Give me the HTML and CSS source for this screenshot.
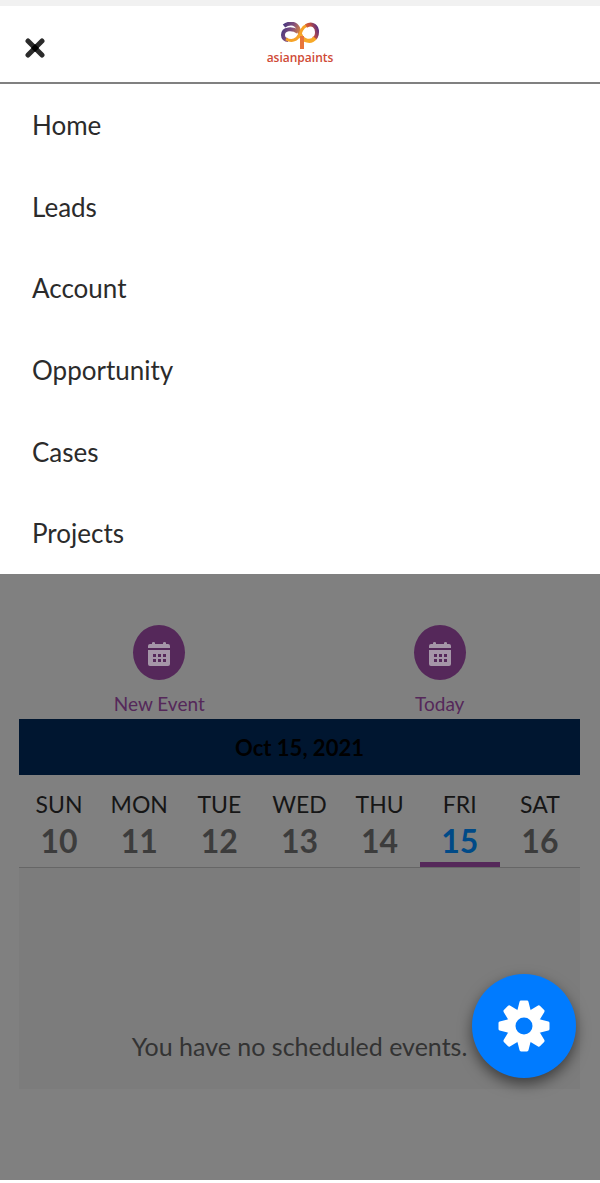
FILE: index.html
```html
<!DOCTYPE html>
<html lang="en">
<head>
  <meta charset="UTF-8">
  <meta name="viewport" content="width=device-width, initial-scale=1.0">
  <title>Asian Paints - Calendar</title>
  <link rel="stylesheet" href="styles.css">
</head>
<body>
  <!-- Header with close button and logo -->
  <header class="header">
    <button class="close-btn" type="button" aria-label="Close menu">
      <svg width="20" height="20" viewBox="0 0 20 20">
        <path d="M3 3L17 17M17 3L3 17" stroke="#2b2b2b" stroke-width="5" stroke-linecap="round"/>
        <path d="M10 6L14 10L10 14L6 10Z" fill="#000"/>
      </svg>
    </button>
    <a class="logo" href="#">
      <svg width="40" height="28" viewBox="0 0 40 28" fill="none">
        <defs>
          <linearGradient id="loopLeft" gradientUnits="userSpaceOnUse" x1="1" y1="6" x2="21" y2="14">
            <stop offset="0" stop-color="#43357f"/>
            <stop offset="0.5" stop-color="#84507c"/>
            <stop offset="1" stop-color="#f0922e"/>
          </linearGradient>
          <linearGradient id="loopRight" gradientUnits="userSpaceOnUse" x1="22" y1="12" x2="38" y2="6">
            <stop offset="0" stop-color="#f08a2c"/>
            <stop offset="0.6" stop-color="#c8503c"/>
            <stop offset="1" stop-color="#5a2f80"/>
          </linearGradient>
        </defs>
        <path d="M4 4C8 1 15 0 18 6C19 9 20 13 22 16" stroke="url(#loopLeft)" stroke-width="4"/>
        <path d="M18 10C13 6 3 6 3 13C3 16 5 18 8 18" stroke="url(#loopLeft)" stroke-width="4"/>
        <path d="M6 17C12 20 17 18 20 12C22 6 25 3 29 3" stroke="#f6a328" stroke-width="3"/>
        <path d="M26 4C33 0 37 5 37 10C37 14 36 16 33 17" stroke="url(#loopRight)" stroke-width="4"/>
        <path d="M20 13C23 19 31 21 35 16" stroke="#f7a928" stroke-width="4"/>
        <path d="M22 14V27" stroke="#e8743a" stroke-width="4"/>
      </svg>
      <span class="logo-text">asianpaints</span>
    </a>
  </header>

  <!-- Menu links -->
  <nav class="menu">
    <a href="#">Home</a>
    <a href="#">Leads</a>
    <a href="#">Account</a>
    <a href="#">Opportunity</a>
    <a href="#">Cases</a>
    <a href="#">Projects</a>
  </nav>

  <!-- Calendar, dimmed while the menu is open -->
  <main class="calendar">
    <div class="actions">
      <button class="action" type="button">
        <span class="action-icon">
          <svg width="22" height="24" viewBox="0 0 22 24">
            <path fill="#a596a8" fill-rule="evenodd" d="M0 6V4Q0 2 2 2H4V1Q4 0 5.500 0T7 1V2H15V1Q15 0 16.500 0T18 1V2H20Q22 2 22 4V6ZM0 8H22V22Q22 24 20 24H2Q0 24 0 22ZM5 12V15H8V12ZM10 12V15H13V12ZM15 12V15H18V12ZM5 17V20H8V17ZM10 17V20H13V17ZM15 17V20H18V17Z"/>
          </svg>
        </span>
        New Event
      </button>
      <button class="action" type="button">
        <span class="action-icon">
          <svg width="22" height="24" viewBox="0 0 22 24">
            <path fill="#a596a8" fill-rule="evenodd" d="M0 6V4Q0 2 2 2H4V1Q4 0 5.500 0T7 1V2H15V1Q15 0 16.500 0T18 1V2H20Q22 2 22 4V6ZM0 8H22V22Q22 24 20 24H2Q0 24 0 22ZM5 12V15H8V12ZM10 12V15H13V12ZM15 12V15H18V12ZM5 17V20H8V17ZM10 17V20H13V17ZM15 17V20H18V17Z"/>
          </svg>
        </span>
        Today
      </button>
    </div>

    <h1 class="date-bar">Oct 15, 2021</h1>

    <div class="week">
      <div class="day">SUN <b>10</b></div>
      <div class="day">MON <b>11</b></div>
      <div class="day">TUE <b>12</b></div>
      <div class="day">WED <b>13</b></div>
      <div class="day">THU <b>14</b></div>
      <div class="day selected">FRI <b>15</b></div>
      <div class="day">SAT <b>16</b></div>
    </div>

    <div class="events">
      <p>You have no scheduled events.</p>
    </div>
  </main>

  <!-- Floating settings button -->
  <button class="settings-btn" type="button" aria-label="Settings">
    <svg width="52" height="52" viewBox="-26 -26 52 52">
      <defs>
        <path id="tooth" d="M-5 -16L-3 -24H3L5 -16Z" stroke-width="3" stroke-linejoin="round"/>
      </defs>
      <g fill="#fff" stroke="#fff">
        <use href="#tooth"/>
        <use href="#tooth" transform="rotate(45)"/>
        <use href="#tooth" transform="rotate(90)"/>
        <use href="#tooth" transform="rotate(135)"/>
        <use href="#tooth" transform="rotate(180)"/>
        <use href="#tooth" transform="rotate(225)"/>
        <use href="#tooth" transform="rotate(270)"/>
        <use href="#tooth" transform="rotate(315)"/>
        <circle r="17"/>
      </g>
      <circle r="8.500" fill="#007bff"/>
    </svg>
  </button>
</body>
</html>
```
FILE: styles.css
```css
/* General body styling */
* {
  box-sizing: border-box;
}

body {
  margin: 0;
  background-color: white;
  border-top: 6px solid #f1f1f1;
  font-family: Lato, sans-serif;
  color: #2b2b2b;
}

button {
  border: none;
  padding: 0;
  background: none;
  font-family: inherit;
  cursor: pointer;
}

/* Header */
.header {
  display: grid;
  grid-template-columns: 1fr auto 1fr;
  align-items: center;
  height: 78px;
  padding: 0 24px;
  border-bottom: 2px solid #808080;
}

.close-btn {
  display: flex;
  justify-self: start;
  margin-top: 8px;
  padding: 1px;
}

.logo {
  display: flex;
  flex-direction: column;
  align-items: center;
  text-decoration: none;
}

.logo-text {
  font-family: "Open Sans", sans-serif;
  font-size: 12px;
  font-weight: 600;
  line-height: 16px;
  color: #cf4a35;
}

/* Menu links */
.menu {
  display: flex;
  flex-direction: column;
  min-height: 490px;
}

.menu a {
  display: flex;
  flex: 1;
  align-items: center;
  padding: 0 32px;
  font-size: 26px;
  line-height: 32px;
  color: #2b2b2b;
  text-decoration: none;
}

/* Calendar */
.calendar {
  padding: 51px 20px 91px 19px;
  background-color: #808080;
}

.actions {
  display: grid;
  grid-template-columns: 1fr 1fr;
}

.action {
  display: flex;
  flex-direction: column;
  align-items: center;
  gap: 10px;
  padding-bottom: 2px;
  font-size: 19px;
  line-height: 27px;
  color: #55285a;
}

.action-icon {
  display: flex;
  align-items: center;
  justify-content: center;
  width: 52px;
  height: 55px;
  padding-top: 2px;
  border-radius: 50%;
  background-color: #55285a;
}

.date-bar {
  margin: 0;
  padding-top: 2px;
  background-color: #001630;
  color: black;
  font-size: 22px;
  line-height: 54px;
  text-align: center;
}

.week {
  display: grid;
  grid-template-columns: repeat(7, 1fr);
  padding-top: 12px;
  border-bottom: 1px solid #666;
}

.day {
  display: flex;
  flex-direction: column;
  align-items: center;
  border-bottom: 5px solid transparent;
  font-size: 23px;
  line-height: 34px;
  color: #161616;
}

.day b {
  padding-bottom: 1px;
  font-size: 32px;
  line-height: 40px;
  color: #3c3c3c;
}

.selected {
  border-bottom-color: #55285a;
}

.selected b {
  color: #004a87;
}

.events {
  padding: 156px 0 20px;
  background-color: #7c7c7c;
  color: #333;
  font-size: 25px;
  line-height: 45px;
  text-align: center;
}

.events p {
  margin: 0;
}

/* Floating settings button */
.settings-btn {
  position: fixed;
  right: 24px;
  bottom: 105px;
  display: flex;
  align-items: center;
  justify-content: center;
  width: 104px;
  height: 104px;
  border-radius: 50%;
  background-color: #007bff;
  box-shadow: 0 6px 14px rgba(0, 0, 0, 0.5);
}
```
